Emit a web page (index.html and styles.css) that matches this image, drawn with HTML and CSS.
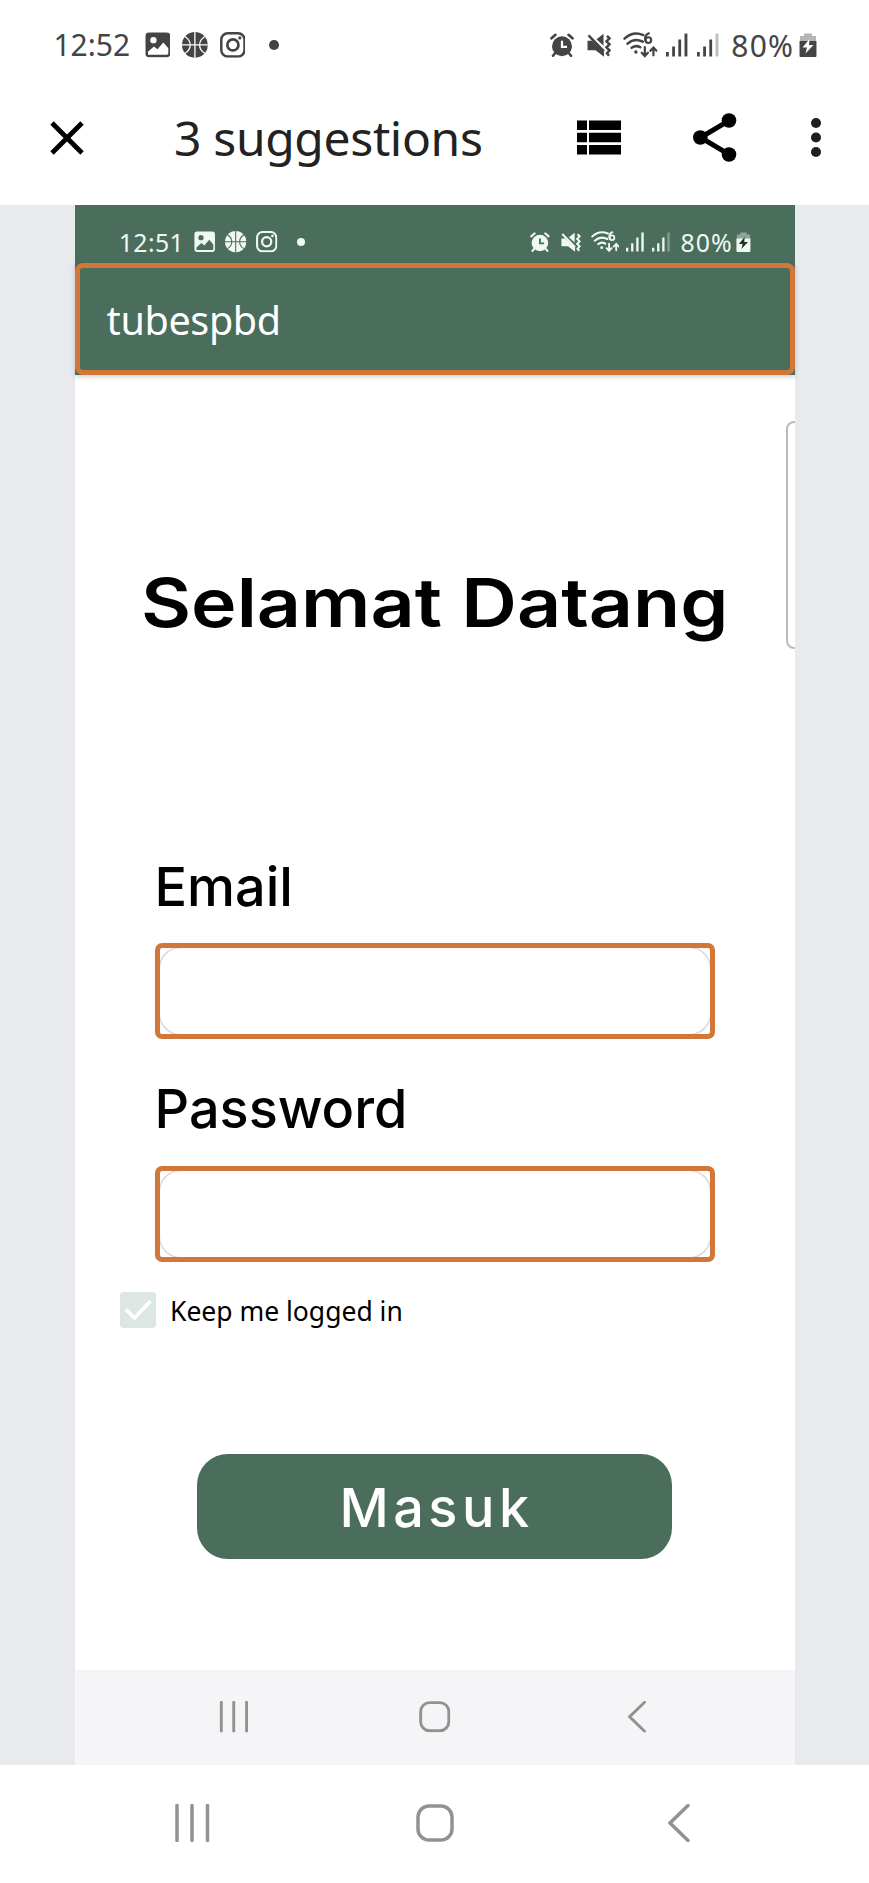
FILE: index.html
```html
<!DOCTYPE html>
<html lang="id">
<head>
<meta charset="utf-8">
<title>3 suggestions</title>
<link rel="stylesheet" href="styles.css">
</head>
<body>
<svg class="defs" aria-hidden="true">
  <symbol id="image" viewBox="0 0 26 26"><path fill="currentColor" fill-rule="evenodd" d="M4 .5H22Q25.500.5 25.500 4V22Q25.500 25.500 22 25.500H4Q.5 25.500.5 22V4Q.5.5 4 .5ZM3 20L9 14.500L12.500 17.500L18.500 10.500L23.500 16.500V21.500Q23.500 23 22 23H3ZM8.500 5A3.200 3.200 0 1 0 8.500 11.400A3.200 3.200 0 1 0 8.500 5Z"/></symbol>
  <symbol id="ball" viewBox="0 0 26 26"><circle cx="13" cy="13" r="13" fill="currentColor"/><path class="seam" d="M13 0V26M0 13H26M3 4.500C10 9 10 17 3 21.500M23 4.500C16 9 16 17 23 21.500"/></symbol>
  <symbol id="insta" viewBox="0 0 26 26"><g fill="none" stroke="currentColor"><rect x="1.300" y="1.300" width="23.400" height="23.400" rx="6.500" stroke-width="2.500"/><circle cx="13" cy="13" r="5.600" stroke-width="2.700"/></g><circle cx="20" cy="6" r="1.600" fill="currentColor"/></symbol>
  <symbol id="alarm" viewBox="0 0 24 24"><circle cx="12" cy="13" r="10" fill="currentColor"/><g fill="none" stroke="currentColor" stroke-width="2.600" stroke-linecap="round"><path d="M1.500 5L5.500 1.500M22.500 5L18.500 1.500M5 20L3 22.500M19 20L21 22.500"/></g><path class="cut" d="M12 7.500V13.500H17"/></symbol>
  <symbol id="mute" viewBox="0 0 24 24"><path fill="currentColor" d="M.5 7.500H5L17 19V23.500L8.500 17H.5ZM9.500 6L16.500.5V12.500Z"/><path fill="none" stroke="currentColor" stroke-width="2.500" d="M1.500 2L17 18M20 2.500L22.500 5L19.500 8L22.500 11L19.500 14L22.500 17L20 20L22 22.500"/></symbol>
  <symbol id="wifi" viewBox="0 0 34 26"><g fill="none" stroke="currentColor" stroke-width="2.500" stroke-linecap="round"><path d="M1.500 6.500C7 1.500 14 .5 20 3M4.500 11.500C9 7.500 14.500 7 19.500 9.500M8.500 15.500C11.500 13.500 14.500 13.500 17 15"/><path stroke-width="2.200" d="M25.500 1.300C22.500 2.500 21.500 5.500 22 8"/><circle cx="25" cy="8" r="2.800" stroke-width="2.100"/><path stroke-width="2.200" d="M21.500 15V23.500M18.500 20.500L21.500 23.700L24.500 20.500M30 23V15.500M27 18.500L30 15.300L33 18.500"/></g><circle cx="12.700" cy="19.800" r="1.700" fill="currentColor"/></symbol>
  <symbol id="signal" viewBox="0 0 22 24"><path fill="currentColor" d="M0 19H2.800V23.500H0ZM6.200 13.500H9V23.500H6.200ZM12.400 6.500H15.200V23.500H12.400Z"/></symbol>
  <symbol id="bar4" viewBox="0 0 22 24"><path fill="currentColor" d="M18.600.5H21.500V23.500H18.600Z"/></symbol>
  <symbol id="battery" viewBox="0 0 18 25"><path fill="currentColor" opacity=".4" d="M5 .5H13V3H17V9H1V3H5Z"/><path fill="currentColor" d="M.5 8H17.500V22.500Q17.500 24.500 15.500 24.500H2.500Q.5 24.500.5 22.500Z"/><path class="bolt" d="M10.500 6L3.500 14.500H8L6.500 20.500L14.500 12H10Z"/></symbol>
  <symbol id="recents" viewBox="0 0 38 38"><path class="line" d="M4 1.500V36.500M19 1.500V36.500M34.500 1.500V36.500"/></symbol>
  <symbol id="home" viewBox="0 0 38 38"><rect class="line" x="2" y="2" width="34" height="34" rx="11"/></symbol>
  <symbol id="back" viewBox="0 0 22 38"><path class="line" d="M20 1.500L2 19L20 36.500"/></symbol>
</svg>

<header>
  <div class="status">
    <span class="clock">12:52</span>
    <svg class="app"><use href="#image"/></svg>
    <svg class="app"><use href="#ball"/></svg>
    <svg class="app"><use href="#insta"/></svg>
    <i class="more"></i>
    <svg class="alarm"><use href="#alarm"/></svg>
    <svg class="mute"><use href="#mute"/></svg>
    <svg class="wifi"><use href="#wifi"/></svg>
    <svg class="signal"><use href="#signal"/><use href="#bar4"/></svg>
    <svg class="signal second"><use href="#signal"/><use class="faint" href="#bar4"/></svg>
    <span class="percent">80%</span>
    <svg class="battery"><use href="#battery"/></svg>
  </div>
  <div class="toolbar">
    <svg class="close" viewBox="0 0 34 34"><path d="M2 2L32 32M32 2L2 32" stroke="#000" stroke-width="4.800"/></svg>
    <h1>3 suggestions</h1>
    <svg class="list" viewBox="0 0 44 35"><path d="M0 .5H10V10H0ZM12 .5H44V10H12ZM0 12.700H10V22.200H0ZM12 12.700H44V22.200H12ZM0 25H10V34.500H0ZM12 25H44V34.500H12Z"/></svg>
    <svg class="share" viewBox="0 0 44 49"><path d="M36 7.700L7.500 24.500L36 41.300" fill="none" stroke="#000" stroke-width="5"/><circle cx="36" cy="7.500" r="7.300"/><circle cx="7.300" cy="24.500" r="7.300"/><circle cx="36" cy="41.500" r="7.300"/></svg>
    <svg class="kebab" viewBox="0 0 10 39"><circle cx="5" cy="5" r="5"/><circle cx="5" cy="19.500" r="5"/><circle cx="5" cy="34" r="5"/></svg>
  </div>
</header>

<main>
  <div class="phone">
    <div class="status inner">
      <span class="clock">12:51</span>
      <svg class="app"><use href="#image"/></svg>
      <svg class="app"><use href="#ball"/></svg>
      <svg class="app"><use href="#insta"/></svg>
      <i class="more"></i>
      <svg class="alarm"><use href="#alarm"/></svg>
      <svg class="mute"><use href="#mute"/></svg>
      <svg class="wifi"><use href="#wifi"/></svg>
      <svg class="signal"><use href="#signal"/><use href="#bar4"/></svg>
      <svg class="signal second"><use href="#signal"/><use class="faint" href="#bar4"/></svg>
      <span class="percent">80%</span>
      <svg class="battery"><use href="#battery"/></svg>
    </div>
    <div class="appbar"><div class="outline">tubespbd</div></div>
    <div class="screen">
      <i class="edge-handle"></i>
      <h2><span>Selamat Datang</span></h2>
      <label class="email">Email</label>
      <div class="field"><i></i></div>
      <label class="password">Password</label>
      <div class="field"><i></i></div>
      <div class="keep">
        <svg viewBox="0 0 36 36"><rect width="36" height="36" rx="4" fill="#dce7e3"/><path d="M6 17.500L14.500 26L30.500 9" fill="none" stroke="#fff" stroke-width="3.800"/></svg>
        <span>Keep me logged in</span>
      </div>
      <button>Masuk</button>
    </div>
    <nav class="nav inner-nav">
      <svg class="recents"><use href="#recents"/></svg>
      <svg class="home"><use href="#home"/></svg>
      <svg class="back"><use href="#back"/></svg>
    </nav>
  </div>
</main>
<nav class="nav">
  <svg class="recents"><use href="#recents"/></svg>
  <svg class="home"><use href="#home"/></svg>
  <svg class="back"><use href="#back"/></svg>
</nav>
</body>
</html>
```
FILE: styles.css
```css
* { box-sizing: border-box; }
body { margin: 0; width: 869px; height: 1883px; background: #fff; color: #000; font-family: "Noto Sans", sans-serif; overflow: hidden; }
svg { display: block; flex: none; }
.defs { width: 0; height: 0; position: absolute; }
h1, h2 { margin: 0; font-weight: 400; }

/* Status bar: em-sized so the captured one scales with its font size */
.status { --bg: #fff; display: flex; align-items: center; height: 90px; font-size: 30px; color: #444; padding-left: 1.780em; white-space: nowrap; }
.clock { width: 2.560em; position: relative; top: -.020em; }
.percent { width: 2.170em; margin-left: .400em; letter-spacing: .040em; }
.status .app { width: .860em; height: .860em; margin-left: .390em; }
.clock + .app { margin-left: .480em; }
.more { width: .330em; height: .330em; border-radius: 50%; background: currentColor; margin-left: .780em; margin-right: 9.050em; }
.alarm { width: .800em; height: .820em; }
.mute { width: .800em; height: .820em; margin-left: .430em; }
.wifi { width: 1.150em; height: .880em; margin-left: .400em; }
.signal { width: .730em; height: .800em; margin-left: .270em; }
.signal.second { margin-left: .330em; }
.faint { opacity: .35; }
.battery { width: .600em; height: .830em; margin-left: .080em; }
.seam { fill: none; stroke: var(--bg); stroke-width: 1.300; }
.cut { fill: none; stroke: var(--bg); stroke-width: 2.200; }
.bolt { fill: var(--bolt, #fff); }
.status.inner { --bg: #4a6d5c; --bolt: #203028; height: 58px; font-size: 24.860px; color: #f0f8f4; padding-top: 16px; background: #4a6d5c; }
.inner .clock { letter-spacing: .015em; }

.toolbar { display: flex; align-items: center; height: 115px; padding: 0 0 20px 50px; }
.close { width: 34px; height: 34px; }
.toolbar h1 { width: 403px; margin-left: 90px; font-size: 48px; line-height: 60px; letter-spacing: -.35px; color: #222; }
.list { width: 44px; height: 35px; }
.share { width: 44px; height: 49px; margin-left: 72px; }
.kebab { width: 10px; height: 39px; margin-left: 74px; fill: #1f1f1f; }

main { height: 1560px; background: #e8eaee; display: flex; justify-content: center; }
.phone { width: 720px; height: 1560px; background: #fff; }
.appbar { height: 112px; background: #4a6d5c; box-shadow: 0 2px 5px rgba(0,0,0,.18); }
.outline { height: 112px; border: 5px solid #d37739; border-radius: 8px; padding-left: 27px; color: #fff; font-size: 39.500px; line-height: 104px; letter-spacing: -.35px; }
.screen { position: relative; height: 1295px; overflow: hidden; padding-top: 183px; }
.edge-handle { position: absolute; top: 46px; right: -10px; width: 19px; height: 228px; border: 2px solid #bbb; border-radius: 8px; }
h2 { height: 90px; line-height: 90px; padding-left: 66px; font-family: Inter, sans-serif; font-size: 67px; font-weight: 600; white-space: nowrap; }
h2 span { display: inline-block; transform-origin: left; transform: scaleX(1.150); }
label { display: block; padding-left: 80px; font-family: Inter, sans-serif; font-size: 54px; font-weight: 500; line-height: 66px; height: 66px; }
.email { margin-top: 206px; }
.password { margin-top: 37px; }
.field { width: 560px; height: 96px; margin: 23px 0 0 80px; border: 5px solid #d37739; border-radius: 7px; overflow: hidden; }
.password + .field { margin-top: 24px; }
.field i { display: block; height: 86px; background: #fff; border-radius: 21px; box-shadow: 0 0 0 1.500px #d8d8dd; }
.keep { display: flex; align-items: center; height: 36px; margin: 30px 0 0 45px; font-size: 27.500px; white-space: nowrap; }
.keep svg { width: 36px; height: 36px; }
.keep span { margin-left: 14px; transform-origin: left; transform: scaleX(.963); }
button { display: block; width: 475px; height: 105px; margin: 126px 0 0 122px; padding: 2px 0 0 5px; border: 0; border-radius: 31px; background: #4a6d5c; color: #fff; font: 500 54px/103px Inter, sans-serif; letter-spacing: 4.500px; }

.nav { --k: 1; display: flex; height: 118px; padding: calc(39px * var(--k)) 0 0 calc(173px * var(--k)); }
.inner-nav { --k: .8285; height: 95px; background: #f5f5f7; padding-top: 31px; }
.recents, .home { width: calc(38px * var(--k)); height: calc(38px * var(--k)); }
.home { margin-left: calc(205px * var(--k)); }
.back { width: calc(22px * var(--k)); height: calc(38px * var(--k)); margin-left: calc(214px * var(--k)); }
.line { fill: none; stroke: #929292; stroke-width: 3.500; stroke-linecap: round; }
.inner-nav svg { overflow: visible; }
```
